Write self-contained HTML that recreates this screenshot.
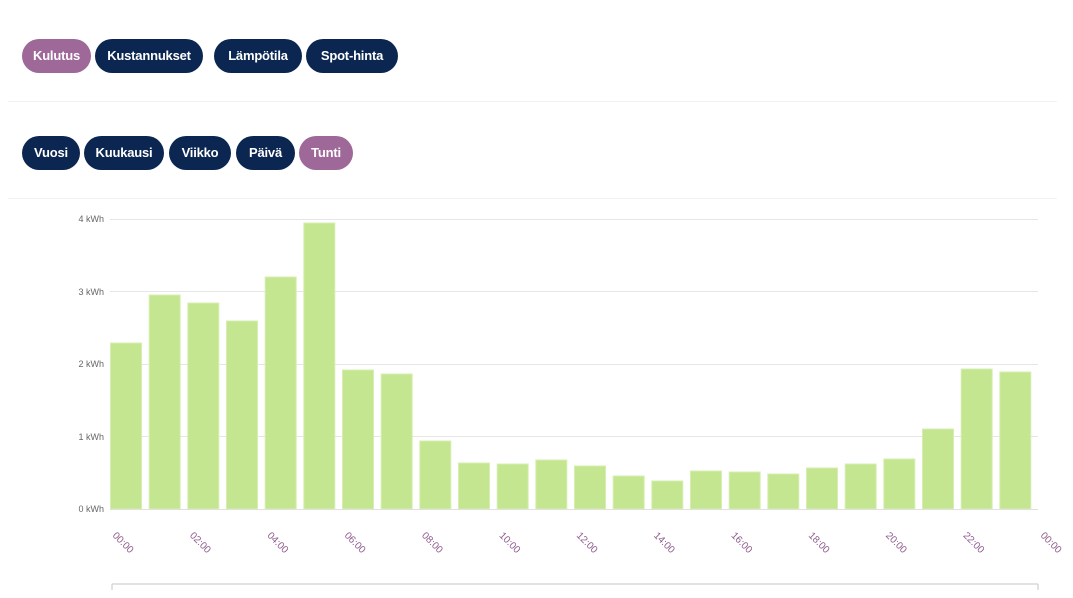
<!DOCTYPE html>
<html><head><meta charset="utf-8"><style>
body{margin:0;width:1073px;height:598px;background:#fff;font-family:"Liberation Sans",sans-serif;position:relative;overflow:hidden}
.b{position:absolute;height:34px;line-height:34px;border-radius:17px;background:#0b2650;color:#fff;font-weight:bold;font-size:13px;text-align:center;letter-spacing:-0.2px}
.p{background:#9e6898}
.sep{position:absolute;left:8px;width:1049px;height:1px;background:#f2f2f2}
</style></head><body>
<div class="b p" style="left:22px;top:39px;width:69px">Kulutus</div>
<div class="b" style="left:95px;top:39px;width:108px">Kustannukset</div>
<div class="b" style="left:214px;top:39px;width:88px">Lämpötila</div>
<div class="b" style="left:306px;top:39px;width:92px">Spot-hinta</div>
<div class="sep" style="top:101px"></div>
<div class="b" style="left:22px;top:136px;width:58px">Vuosi</div>
<div class="b" style="left:84px;top:136px;width:80px">Kuukausi</div>
<div class="b" style="left:169px;top:136px;width:62px">Viikko</div>
<div class="b" style="left:236px;top:136px;width:59px">Päivä</div>
<div class="b p" style="left:299px;top:136px;width:54px">Tunti</div>
<div class="sep" style="top:198px"></div>
<svg width="1073" height="598" style="position:absolute;left:0;top:0" font-family="Liberation Sans, sans-serif">
<g stroke="#e6e6e6" stroke-width="1">
<line x1="110" y1="219.5" x2="1038" y2="219.5"/>
<line x1="110" y1="291.5" x2="1038" y2="291.5"/>
<line x1="110" y1="364.5" x2="1038" y2="364.5"/>
<line x1="110" y1="436.5" x2="1038" y2="436.5"/>
</g>
<g font-size="9" fill="#666" text-anchor="end">
<text x="104" y="222">4 kWh</text><text x="104" y="295">3 kWh</text><text x="104" y="367">2 kWh</text><text x="104" y="440">1 kWh</text><text x="104" y="512">0 kWh</text>
</g>
<g fill="#c5e690" stroke="#d6efb0" stroke-width="1">
<rect x="110.5" y="343" width="31" height="166"/>
<rect x="149.2" y="295" width="31" height="214"/>
<rect x="187.8" y="303" width="31" height="206"/>
<rect x="226.5" y="321" width="31" height="188"/>
<rect x="265.2" y="277" width="31" height="232"/>
<rect x="303.8" y="223" width="31" height="286"/>
<rect x="342.5" y="370" width="31" height="139"/>
<rect x="381.2" y="374" width="31" height="135"/>
<rect x="419.8" y="441" width="31" height="68"/>
<rect x="458.5" y="463" width="31" height="46"/>
<rect x="497.2" y="464" width="31" height="45"/>
<rect x="535.8" y="460" width="31" height="49"/>
<rect x="574.5" y="466" width="31" height="43"/>
<rect x="613.2" y="476" width="31" height="33"/>
<rect x="651.8" y="481" width="31" height="28"/>
<rect x="690.5" y="471" width="31" height="38"/>
<rect x="729.2" y="472" width="31" height="37"/>
<rect x="767.8" y="474" width="31" height="35"/>
<rect x="806.5" y="468" width="31" height="41"/>
<rect x="845.2" y="464" width="31" height="45"/>
<rect x="883.8" y="459" width="31" height="50"/>
<rect x="922.5" y="429" width="31" height="80"/>
<rect x="961.2" y="369" width="31" height="140"/>
<rect x="999.8" y="372" width="31" height="137"/>
</g>
<line x1="110" y1="509.5" x2="1038" y2="509.5" stroke="#e0e0e0"/>
<g font-size="10" fill="#8e5a8e">
<text transform="translate(112,536) rotate(45)">00:00</text>
<text transform="translate(189.3,536) rotate(45)">02:00</text>
<text transform="translate(266.7,536) rotate(45)">04:00</text>
<text transform="translate(344,536) rotate(45)">06:00</text>
<text transform="translate(421.3,536) rotate(45)">08:00</text>
<text transform="translate(498.7,536) rotate(45)">10:00</text>
<text transform="translate(576,536) rotate(45)">12:00</text>
<text transform="translate(653.3,536) rotate(45)">14:00</text>
<text transform="translate(730.7,536) rotate(45)">16:00</text>
<text transform="translate(808,536) rotate(45)">18:00</text>
<text transform="translate(885.3,536) rotate(45)">20:00</text>
<text transform="translate(962.7,536) rotate(45)">22:00</text>
<text transform="translate(1040,536) rotate(45)">00:00</text>
</g>
<g stroke="#d8d8d8" stroke-width="1.5" fill="none">
<line x1="112" y1="584" x2="1038" y2="584"/>
<line x1="112" y1="584" x2="112" y2="590"/>
<line x1="1038" y1="584" x2="1038" y2="590"/>
</g>
</svg>
</body></html>
